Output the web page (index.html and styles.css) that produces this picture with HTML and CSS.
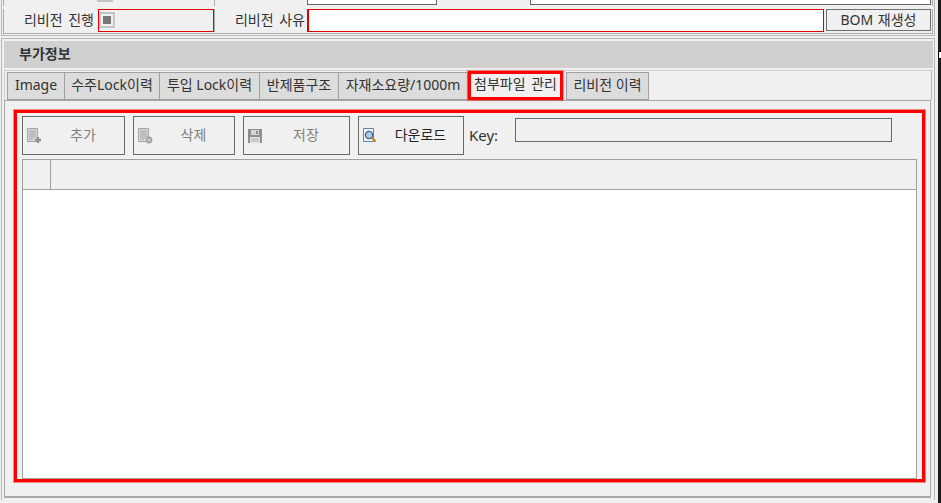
FILE: index.html
```html
<!DOCTYPE html>
<html lang="ko">
<head>
  <meta charset="UTF-8">
  <title>부가정보</title>
  <link rel="stylesheet" href="styles.css">
</head>
<body>
  <div class="page">
    <div class="form-box">
      <div class="row row-cut">
        <div class="cell cell-a"><span class="check check-cut"></span></div>
        <div class="cell cell-b"><span class="cut-input cut-one"></span><span class="cut-gap"></span><span class="cut-input cut-two"></span></div>
      </div>
      <div class="row row-main">
        <div class="cell cell-a">
          <span class="label label-a">리비전 진행</span>
          <span class="red-field"><span class="check"><i></i></span></span>
        </div>
        <div class="cell cell-b">
          <span class="label label-b">리비전 사유</span>
          <span class="reason"></span>
          <span class="bom-btn">BOM 재생성</span>
        </div>
      </div>
    </div>

    <div class="extra-box">
      <div class="extra-title">부가정보</div>
      <div class="tabs">
        <span class="tab tab-image">Image</span>
        <span class="tab tab-order">수주Lock이력</span>
        <span class="tab tab-input">투입 Lock이력</span>
        <span class="tab tab-semi">반제품구조</span>
        <span class="tab tab-usage">자재소요량/1000m</span>
        <span class="tab tab-active">첨부파일 관리</span>
        <span class="tab tab-rev">리비전 이력</span>
      </div>
      <div class="panel">
        <div class="highlight">
          <div class="toolbar">
            <button class="tool tool-add" disabled>
              <svg viewBox="0 0 16 16" width="16" height="16"><path d="M1.5 .5h10v13h-10z" fill="#d8d8d8" stroke="#a4a4a4"/><path d="M3 3h7M3 5h7M3 7h7M3 9h7M3 11h4" stroke="#a4a4a4"/><path d="M12 9v6M9 12h6" stroke="#909090" stroke-width="2.4"/></svg>
              <span>추가</span>
            </button>
            <button class="tool tool-del" disabled>
              <svg viewBox="0 0 16 16" width="16" height="16"><path d="M1.5 .5h10v13h-10z" fill="#d8d8d8" stroke="#a4a4a4"/><path d="M3 3h7M3 5h7M3 7h7M3 9h7M3 11h4" stroke="#a4a4a4"/><circle cx="12" cy="12" r="3.4" fill="#a2a2a2"/><path d="M10.3 10.3l3.4 3.4M13.7 10.3l-3.4 3.4" stroke="#dcdcdc"/></svg>
              <span>삭제</span>
            </button>
            <button class="tool tool-save" disabled>
              <svg viewBox="0 0 16 16" width="16" height="16"><path d="M1 1h14v14H1z" fill="#8e8e8e"/><path d="M4 2h8v5H4z" fill="#d6d6d6"/><path d="M3 9h10v6H3z" fill="#e2e2e2"/><path d="M9 3h2v3H9z" fill="#8e8e8e"/><path d="M4 11h8M4 13h8" stroke="#b0b0b0"/></svg>
              <span>저장</span>
            </button>
            <button class="tool tool-down">
              <svg viewBox="0 0 16 16" width="16" height="16"><path d="M1.5 .5h10v13h-10z" fill="#f4f7fc" stroke="#5f7fb8"/><circle cx="7" cy="7" r="3.6" fill="#a9cdf0" stroke="#44607f" stroke-width="1.2"/><path d="M9.8 9.8l3.8 3.8" stroke="#c8862a" stroke-width="2.2"/></svg>
              <span>다운로드</span>
            </button>
            <label class="key-label">Key:</label>
            <span class="key-input"></span>
          </div>
          <div class="grid">
            <div class="grid-head"><span class="grid-corner"></span></div>
            <div class="grid-body"></div>
          </div>
        </div>
      </div>
    </div>

    <div class="bottom-bar"><span class="bottom-left"></span></div>
    <span class="grip"></span>
  </div>
</body>
</html>
```

FILE: styles.css
```css
html, body {
  margin: 0;
  height: 503px;
  overflow: hidden;
}
body {
  background: #f0f0f0;
  font-family: "Noto Sans", "Noto Sans CJK KR", sans-serif;
  font-size: 14px;
  color: #333;
}
.page {
  position: relative;
  width: 941px;
  height: 503px;
  box-sizing: border-box;
  padding-left: 1px;
  border-right: 3px solid #1c1c1c;
}

/* top form */
.form-box {
  width: 934px;
  box-sizing: border-box;
  border-left: 1px solid #b8b8b8;
  border-right: 1px solid #b8b8b8;
  border-bottom: 1px solid #b8b8b8;
  padding: 0 1px 1px 1px;
}
.row {
  display: flex;
  border-left: 1px solid #aaa;
  border-right: 1px solid #aaa;
  border-bottom: 1px solid #aaa;
}
.row-cut {
  height: 6px;
  border-bottom: 0;
  margin-bottom: 3px;
  overflow: hidden;
}
.row-main {
  height: 23px;
  padding-bottom: 1px;
}
.cell {
  display: flex;
  align-items: flex-start;
}
.cell-a {
  width: 211px;
  border-right: 1px solid #aaa;
  box-sizing: border-box;
  flex: none;
}
.cell-b {
  flex: 1;
}
.check {
  display: flex;
  align-items: center;
  justify-content: center;
  width: 12px;
  height: 12px;
  margin: 2px 0 0 0;
  border: 2px solid #c4c4c4;
  background: #f0f0f0;
}
.check i {
  width: 8px;
  height: 8px;
  background: #767676;
}
.check-cut {
  flex: none;
  margin: -14px 0 0 93px;
}
.cut-input {
  height: 5px;
  background: #fff;
  border: 1px solid #666;
  border-top: 0;
  box-sizing: border-box;
}
.cut-one {
  width: 130px;
  margin-left: 92px;
}
.cut-gap {
  width: 93px;
}
.cut-two {
  width: 401px;
}
.label {
  line-height: 21px;
  text-align: right;
  white-space: nowrap;
  word-spacing: 2px;
}
.label-a {
  width: 90px;
}
.label-b {
  width: 90px;
}
.red-field {
  display: block;
  width: 116px;
  height: 23px;
  margin-left: 4px;
  box-sizing: border-box;
  border: 1px solid #e00000;
}
.reason {
  width: 517px;
  height: 23px;
  margin-left: 2px;
  box-sizing: border-box;
  background: #fff;
  border: 1px solid #e00000;
  border-left-width: 2px;
}
.bom-btn {
  width: 105px;
  height: 22px;
  margin-left: 2px;
  box-sizing: border-box;
  border: 1px solid #707070;
  text-align: center;
  line-height: 20px;
  word-spacing: 1px;
}

/* 부가정보 */
.extra-box {
  width: 934px;
  box-sizing: border-box;
  margin-top: 2px;
  padding: 2px 0 2px 2px;
  border: 1px solid #b8b8b8;
  border-bottom: 0;
}
.extra-title {
  height: 27px;
  margin-right: 1px;
  padding-left: 15px;
  background: #d0d0d0;
  font-weight: 700;
  line-height: 26px;
}
.tabs {
  display: flex;
  height: 29px;
  margin-top: 2px;
  padding-left: 2px;
  align-items: flex-end;
  border: 1px solid #d0d0d0;
  border-bottom: 0;
  border-right-color: #b8b8b8;
  margin-right: 2px;
}
.tab {
  height: 28px;
  box-sizing: border-box;
  border: 1px solid #a0a0a0;
  border-left-width: 0;
  background: #dcdcdc;
  text-align: center;
  line-height: 24px;
  white-space: nowrap;
}
.tab-image {
  width: 58px;
  border-left-width: 1px;
}
.tab-order {
  width: 95px;
}
.tab-input {
  width: 100px;
}
.tab-semi {
  width: 79px;
}
.tab-usage {
  width: 129px;
}
.tab-active {
  position: relative;
  width: 95px;
  height: 29px;
  margin: 0 3px 0 0;
  border: 3px solid #f00;
  background: #f0f0f0;
  line-height: 19px;
  word-spacing: 2px;
  box-shadow: 0 0 1px 1px rgba(255, 0, 0, .35);
}
.tab-rev {
  width: 83px;
  border-left-width: 1px;
}
.panel {
  height: 398px;
  margin-right: 3px;
  box-sizing: border-box;
  padding: 9px 0 0 9px;
  border: 1px solid #a8a8a8;
  border-bottom-width: 2px;
}

/* red highlighted area */
.highlight {
  width: 895px;
  height: 363px;
  padding: 3px 5px 0 5px;
  border: 3px solid #f00;
  box-shadow: 0 0 0 1px rgba(255, 0, 0, .45);
}
.toolbar {
  display: flex;
  align-items: flex-start;
  height: 43px;
}
.tool {
  display: flex;
  align-items: center;
  height: 39px;
  padding: 0 0 0 3px;
  margin-right: 8px;
  box-sizing: border-box;
  background: #f0f0f0;
  border: 1px solid #6a6a6a;
  color: #808080;
  font: inherit;
}
.tool span {
  flex: 1;
  padding-bottom: 3px;
  text-align: center;
}
.tool-add {
  width: 103px;
}
.tool-del {
  width: 102px;
}
.tool-save {
  width: 107px;
}
.tool-down {
  width: 106px;
  margin-right: 5px;
  color: #222;
}
.key-label {
  width: 46px;
  font-size: 15px;
  line-height: 38px;
}
.key-input {
  width: 377px;
  height: 24px;
  margin-top: 2px;
  box-sizing: border-box;
  border: 1px solid #6a6a6a;
}
.grid {
  width: 895px;
  height: 320px;
  box-sizing: border-box;
  border: 1px solid #a0a0a0;
  border-bottom-width: 2px;
}
.grid-head {
  height: 30px;
  box-sizing: border-box;
  border-bottom: 1px solid #a0a0a0;
}
.grid-corner {
  display: block;
  width: 27px;
  height: 100%;
  border-right: 1px solid #a0a0a0;
}
.grid-body {
  height: 288px;
  background: #fff;
}

.bottom-bar {
  height: 2px;
  margin-top: 3px;
  width: 935px;
  border-top: 1px solid #b8b8b8;
}
.bottom-left {
  display: block;
  width: 405px;
  height: 2px;
  border-right: 1px solid #b8b8b8;
}
.grip {
  position: absolute;
  right: -3px;
  top: 51px;
  width: 3px;
  height: 8px;
  background: #fff;
  border: 1px solid #000;
  border-right: 0;
  box-sizing: border-box;
}
```
